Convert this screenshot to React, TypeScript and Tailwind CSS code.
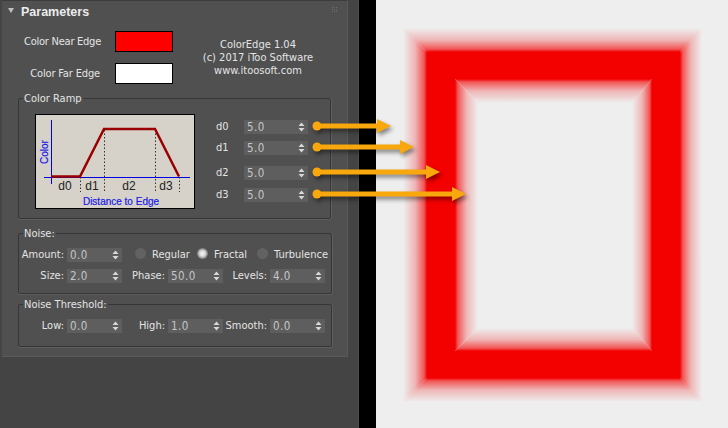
import React from "react";

function Spinner({ value, w = "w-[55px]" }: { value: string; w?: string }) {
  return (
    <div className={`${w} h-[14px] bg-[#5e5e5e] flex items-center justify-between pl-[3px] pr-[3px] text-[#c6c6c6] text-[11.5px] tracking-[0.4px]`}>
      <span className="leading-[14px]">{value}</span>
      <svg width="7" height="10" viewBox="0 0 7 10" className="shrink-0">
        <path d="M3.5 0.5 L6.5 4 H0.5 Z M3.5 9.5 L6.5 6 H0.5 Z" fill="#d8d8d8" />
      </svg>
    </div>
  );
}

function Field({ label, value, w, ml = "" }: { label: string; value: string; w: string; ml?: string }) {
  return (
    <div className={`flex items-center ${ml}`}>
      <span className={`${w} text-right pr-[3px] leading-[14px] whitespace-nowrap`}>{label}</span>
      <Spinner value={value} />
    </div>
  );
}

function Group({ title, className, children }: { title: string; className: string; children: React.ReactNode }) {
  return (
    <div className={`relative border border-[#363636] rounded-[2px] shadow-[0_1px_0_#5e5e5e,1px_0_0_#5e5e5e] ${className}`}>
      <span className="absolute left-[4px] -top-[7px] bg-[#505050] px-px leading-[14px] whitespace-nowrap">{title}</span>
      {children}
    </div>
  );
}

function Radio({ label, on, ml }: { label: string; on?: boolean; ml: string }) {
  return (
    <div className={`flex items-center ${ml}`}>
      <span className={`w-[11px] h-[11px] rounded-full -mt-[3px] ${on ? "bg-[radial-gradient(circle,#f4f4f4_0%,#dcdcdc_35%,#6a6a6a_75%)]" : "bg-[#626262]"}`} />
      <span className="ml-[6px] leading-[14px]">{label}</span>
    </div>
  );
}

function RampPicture() {
  return (
    <svg width="160" height="95" viewBox="0 0 160 95" className="block shrink-0">
      <rect x="0.5" y="0.5" width="159" height="94" fill="#d6d2ca" stroke="#000" />
      <g stroke="#333" strokeDasharray="1.5 2" strokeWidth="1">
        <line x1="45.5" y1="63" x2="45.5" y2="78" />
        <line x1="69.5" y1="16" x2="69.5" y2="78" />
        <line x1="120.5" y1="16" x2="120.5" y2="78" />
        <line x1="144.5" y1="63" x2="144.5" y2="78" />
      </g>
      <line x1="16.5" y1="6" x2="16.5" y2="70" stroke="#0000e0" strokeWidth="1" />
      <line x1="9" y1="63.5" x2="155" y2="63.5" stroke="#0000e0" strokeWidth="1" />
      <path d="M16 62.5 H45 L69 15 H120 L144 62.5" fill="none" stroke="#990000" strokeWidth="2.5" />
      <g fontFamily="'Liberation Sans', sans-serif" fontSize="12" fill="#222">
        <text x="30" y="76" textAnchor="middle">d0</text>
        <text x="57" y="76" textAnchor="middle">d1</text>
        <text x="94" y="76" textAnchor="middle">d2</text>
        <text x="131" y="76" textAnchor="middle">d3</text>
      </g>
      <text x="86" y="91" textAnchor="middle" fontFamily="'Liberation Sans', sans-serif" fontSize="10" stroke="#1a1ae6" strokeWidth="0.2" fill="#1a1ae6">Distance to Edge</text>
      <text x="0" y="0" transform="translate(13 50) rotate(-90)" fontFamily="'Liberation Sans', sans-serif" fontSize="10" stroke="#1a1ae6" strokeWidth="0.2" fill="#1a1ae6">Color</text>
    </svg>
  );
}

type R = [number, number, number, number];

function Band({ id, from, to }: { id: string; from: R; to: R }) {
  const [a, b, c, d] = from;
  const [e, f, g, h] = to;
  const sides = [
    { k: "l", pts: `${a},${b} ${e},${f} ${e},${h} ${a},${d}`, g: [a, 0, e, 0] },
    { k: "r", pts: `${c},${b} ${g},${f} ${g},${h} ${c},${d}`, g: [c, 0, g, 0] },
    { k: "t", pts: `${a},${b} ${e},${f} ${g},${f} ${c},${b}`, g: [0, b, 0, f] },
    { k: "b", pts: `${a},${d} ${e},${h} ${g},${h} ${c},${d}`, g: [0, d, 0, h] },
  ];
  return (
    <>
      {sides.map((s) => (
        <React.Fragment key={s.k}>
          <linearGradient id={id + s.k} gradientUnits="userSpaceOnUse" x1={s.g[0]} y1={s.g[1]} x2={s.g[2]} y2={s.g[3]}>
            <stop offset="0" stopColor="#f30000" />
            <stop offset="0.12" stopColor="#f25555" />
            <stop offset="0.5" stopColor="#efb6b6" />
            <stop offset="1" stopColor="#eeeeee" />
          </linearGradient>
          <polygon points={s.pts} fill={`url(#${id + s.k})`} />
        </React.Fragment>
      ))}
    </>
  );
}

function EdgeRender() {
  return (
    <svg width="352" height="428" viewBox="376 0 352 428" className="block">
      <Band id="o" from={[427, 52, 680, 378]} to={[403, 28, 702, 402]} />
      <path d="M427 52 H680 V378 H427 Z M455 79 V351 H652 V79 Z" fill="#f30000" fillRule="evenodd" />
      <Band id="i" from={[455, 79, 652, 351]} to={[478, 103, 632, 328]} />
    </svg>
  );
}

function Arrow({ y, tip }: { y: number; tip: number }) {
  return (
    <g>
      <circle cx="317" cy={y} r="4.5" fill="#f8a80c" />
      <rect x="317" y={y - 2.5} width={tip - 317 - 13} height="5" fill="#f8a80c" />
      <polygon points={`${tip - 14},${y - 7} ${tip},${y} ${tip - 14},${y + 7}`} fill="#f8a80c" />
    </g>
  );
}

export default function App() {
  return (
    <div className="relative w-[728px] h-[428px] flex overflow-hidden font-['DejaVu_Sans',sans-serif] [font-stretch:condensed] text-[11px] text-[#e4e4e4]">
      <div className="w-[359px] shrink-0 bg-[#444444] border-r border-[#4e4e4e] pl-[2px] pr-[10px]">
        <div className="w-[346px] h-[357px] bg-[#505050] border-t border-b border-r border-t-[#3c3c3c] border-b-[#5a5a5a] border-r-[#5a5a5a] pr-[1px]">
          <div className="h-[22px] flex items-center pl-[6px] pr-[8px]">
            <svg width="6" height="5" viewBox="0 0 6 5" className="-mt-[4px]"><path d="M0 0 H6 L3 5 Z" fill="#c0c0c0" /></svg>
            <span className="ml-[7px] font-['Liberation_Sans',sans-serif] font-bold text-[12.5px] text-[#ececec]">Parameters</span>
            <svg width="6" height="6" viewBox="0 0 6 6" className="ml-auto -mt-[4px]">
              <g fill="#6e6e6e">
                <rect x="0" y="0" width="1" height="1" /><rect x="2" y="0" width="1" height="1" /><rect x="4" y="0" width="1" height="1" />
                <rect x="0" y="2" width="1" height="1" /><rect x="2" y="2" width="1" height="1" /><rect x="4" y="2" width="1" height="1" />
                <rect x="0" y="4" width="1" height="1" /><rect x="2" y="4" width="1" height="1" /><rect x="4" y="4" width="1" height="1" />
              </g>
            </svg>
          </div>

          <div className="flex h-[61px] mt-[8px]">
            <div className="flex flex-col gap-[11px]">
              <div className="flex items-center">
                <span className="w-[99px] pt-[1px] text-right whitespace-nowrap tracking-[-0.25px]">Color Near Edge</span>
                <div className="ml-[14px] w-[58px] h-[21px] bg-[#ff0000] border border-black" />
              </div>
              <div className="flex items-center">
                <span className="w-[98px] pt-[1px] text-right whitespace-nowrap tracking-[-0.15px]">Color Far Edge</span>
                <div className="ml-[15px] w-[58px] h-[21px] bg-white border border-black" />
              </div>
            </div>
            <div className="ml-[28px] w-[114px] text-center leading-[13px] pt-[7px] whitespace-nowrap">
              <div>ColorEdge 1.04</div>
              <div>(c) 2017 iToo Software</div>
              <div>www.itoosoft.com</div>
            </div>
          </div>

          <Group title="Color Ramp" className="ml-[16px] mt-[6px] w-[313px] h-[121px] flex pl-[16px] pt-[15px]">
            <RampPicture />
            <div className="ml-[20px] mt-[5px] flex flex-col">
              {[["d0", "5.0", "mt-[1px]"], ["d1", "5.0", "mt-[7px]"], ["d2", "5.0", "mt-[11px]"], ["d3", "5.0", "mt-[8px]"]].map(([l, v, m]) => (
                <div key={l} className={`flex items-center ${m}`}>
                  <span className="w-[29px] pl-[1px] leading-[14px]">{l}</span>
                  <Spinner value={v} w="w-[64px]" />
                </div>
              ))}
            </div>
          </Group>

          <Group title="Noise:" className="ml-[16px] mt-[14px] w-[314px] h-[61px] pt-[14px]">
            <div className="flex items-center">
              <Field label="Amount:" value="0.0" w="w-[48px]" />
              <Radio label="Regular" ml="ml-[13px]" />
              <Radio label="Fractal" on ml="ml-[7px]" />
              <Radio label="Turbulence" ml="ml-[10px]" />
            </div>
            <div className="flex items-center mt-[7px]">
              <Field label="Size:" value="2.0" w="w-[48px]" />
              <Field label="Phase:" value="50.0" w="w-[46px]" />
              <Field label="Levels:" value="4.0" w="w-[47px]" />
            </div>
          </Group>

          <Group title="Noise Threshold:" className="ml-[16px] mt-[10px] w-[314px] h-[43px] pt-[14px]">
            <div className="flex items-center">
              <Field label="Low:" value="0.0" w="w-[48px]" />
              <Field label="High:" value="1.0" w="w-[46px]" />
              <Field label="Smooth:" value="0.0" w="w-[47px]" />
            </div>
          </Group>
        </div>
      </div>
      <div className="w-[17px] shrink-0 bg-black" />
      <div className="flex-1 bg-[#eeeeee]">
        <EdgeRender />
      </div>
      <svg width="728" height="428" viewBox="0 0 728 428" className="absolute left-0 top-0 pointer-events-none drop-shadow-[2px_3px_2px_rgba(0,0,0,0.45)]">
        <Arrow y={126} tip={391} />
        <Arrow y={147} tip={414} />
        <Arrow y={172} tip={440} />
        <Arrow y={194} tip={466} />
      </svg>
    </div>
  );
}
